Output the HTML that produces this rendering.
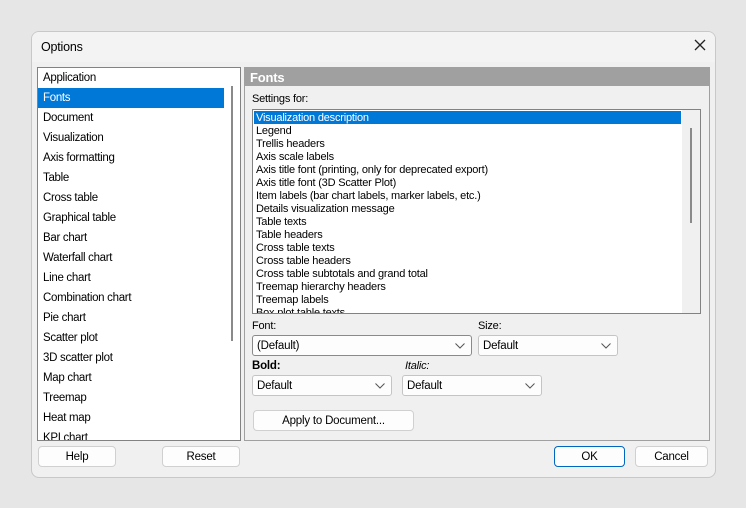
<!DOCTYPE html>
<html><head><style>
*{box-sizing:border-box;margin:0;padding:0}
body{width:746px;height:508px;background:#e6e6e6;font-family:"Liberation Sans",sans-serif;font-size:11.5px;letter-spacing:-0.2px;color:#000;position:relative;overflow:hidden}
.abs{position:absolute}
.win{left:31px;top:31px;width:685px;height:447px;background:#f0f0f0;border:1px solid #c8c8c8;border-radius:8px;overflow:hidden}
.title{left:0;top:0;width:100%;height:30px;background:#f3f3f3}
.lst{background:#fff;border:1px solid #828282}
.item{position:absolute;left:5px;height:20px;line-height:21px;white-space:nowrap;font-size:11.5px;letter-spacing:-0.3px}
.sitem{position:absolute;left:3px;height:13px;line-height:14px;white-space:nowrap;font-size:11px}
.btn{background:#fdfdfd;border:1px solid #d0d0d0;border-radius:4px;text-align:center;line-height:20px}
.combo{background:#fdfdfd;border:1px solid #c4c4c4;border-radius:3px;line-height:20px;padding-left:4px}
.combo svg{position:absolute;right:6px;top:7px}
</style></head><body>
<div class="abs win">
 <div class="abs title"></div>
 <div class="abs" style="left:9px;top:8px;font-size:12.5px">Options</div>
 <svg class="abs" style="left:662px;top:7px" width="12" height="12"><path d="M1 1L11 11M11 1L1 11" stroke="#222" stroke-width="1.3"/></svg>
</div>
<div class="abs lst" style="left:37px;top:67px;width:204px;height:374px;overflow:hidden">
 <div class="abs" style="left:0;top:20px;width:186px;height:20px;background:#0078d7"></div>
 <div class="abs" style="left:193px;top:18px;width:2px;height:255px;background:#8a8a8a"></div>
 <div class="item" style="top:0">Application</div>
 <div class="item" style="top:20px;color:#fff">Fonts</div>
 <div class="item" style="top:40px">Document</div>
 <div class="item" style="top:60px">Visualization</div>
 <div class="item" style="top:80px">Axis formatting</div>
 <div class="item" style="top:100px">Table</div>
 <div class="item" style="top:120px">Cross table</div>
 <div class="item" style="top:140px">Graphical table</div>
 <div class="item" style="top:160px">Bar chart</div>
 <div class="item" style="top:180px">Waterfall chart</div>
 <div class="item" style="top:200px">Line chart</div>
 <div class="item" style="top:220px">Combination chart</div>
 <div class="item" style="top:240px">Pie chart</div>
 <div class="item" style="top:260px">Scatter plot</div>
 <div class="item" style="top:280px">3D scatter plot</div>
 <div class="item" style="top:300px">Map chart</div>
 <div class="item" style="top:320px">Treemap</div>
 <div class="item" style="top:340px">Heat map</div>
 <div class="item" style="top:360px">KPI chart</div>
</div>
<div class="abs" style="left:244px;top:67px;width:466px;height:374px;border:1px solid #a0a0a0"></div>
<div class="abs" style="left:245px;top:68px;width:464px;height:18px;background:#a0a0a0;color:#fff;font-weight:bold;font-size:13px;line-height:19px;padding-left:5px">Fonts</div>
<div class="abs" style="left:252px;top:93px;font-size:11px">Settings for:</div>
<div class="abs lst" style="left:252px;top:109px;width:449px;height:205px;overflow:hidden">
 <div class="abs" style="left:429px;top:0;width:18px;height:203px;background:#f0f0f0"></div>
 <div class="abs" style="left:437px;top:18px;width:2px;height:95px;background:#8a8a8a"></div>
 <div class="abs" style="left:1px;top:1px;width:427px;height:13px;background:#0078d7"></div>
 <div class="sitem" style="top:1px;color:#fff">Visualization description</div>
 <div class="sitem" style="top:14px">Legend</div>
 <div class="sitem" style="top:27px">Trellis headers</div>
 <div class="sitem" style="top:40px">Axis scale labels</div>
 <div class="sitem" style="top:53px">Axis title font (printing, only for deprecated export)</div>
 <div class="sitem" style="top:66px">Axis title font (3D Scatter Plot)</div>
 <div class="sitem" style="top:79px">Item labels (bar chart labels, marker labels, etc.)</div>
 <div class="sitem" style="top:92px">Details visualization message</div>
 <div class="sitem" style="top:105px">Table texts</div>
 <div class="sitem" style="top:118px">Table headers</div>
 <div class="sitem" style="top:131px">Cross table texts</div>
 <div class="sitem" style="top:144px">Cross table headers</div>
 <div class="sitem" style="top:157px">Cross table subtotals and grand total</div>
 <div class="sitem" style="top:170px">Treemap hierarchy headers</div>
 <div class="sitem" style="top:183px">Treemap labels</div>
 <div class="sitem" style="top:196px">Box plot table texts</div>
</div>
<div class="abs" style="left:252px;top:320px;font-size:11px">Font:</div>
<div class="abs" style="left:478px;top:320px;font-size:11px">Size:</div>
<div class="abs combo" style="left:252px;top:335px;width:220px;height:21px;border-color:#8a8a8a">(Default)<svg width="10" height="6"><path d="M0.5 0.5L5 5L9.5 0.5" fill="none" stroke="#555"/></svg></div>
<div class="abs combo" style="left:478px;top:335px;width:140px;height:21px">Default<svg width="10" height="6"><path d="M0.5 0.5L5 5L9.5 0.5" fill="none" stroke="#555"/></svg></div>
<div class="abs" style="left:252px;top:360px;font-weight:bold">Bold:</div>
<div class="abs" style="left:405px;top:360px;font-style:italic;font-size:11px">Italic:</div>
<div class="abs combo" style="left:252px;top:375px;width:140px;height:21px">Default<svg width="10" height="6"><path d="M0.5 0.5L5 5L9.5 0.5" fill="none" stroke="#555"/></svg></div>
<div class="abs combo" style="left:402px;top:375px;width:140px;height:21px">Default<svg width="10" height="6"><path d="M0.5 0.5L5 5L9.5 0.5" fill="none" stroke="#555"/></svg></div>
<div class="abs btn" style="left:253px;top:410px;width:161px;height:21px">Apply to Document...</div>
<div class="abs btn" style="left:38px;top:446px;width:78px;height:21px">Help</div>
<div class="abs btn" style="left:162px;top:446px;width:78px;height:21px">Reset</div>
<div class="abs btn" style="left:554px;top:446px;width:71px;height:21px;border:1.5px solid #0067c0">OK</div>
<div class="abs btn" style="left:635px;top:446px;width:73px;height:21px">Cancel</div>
</body></html>
